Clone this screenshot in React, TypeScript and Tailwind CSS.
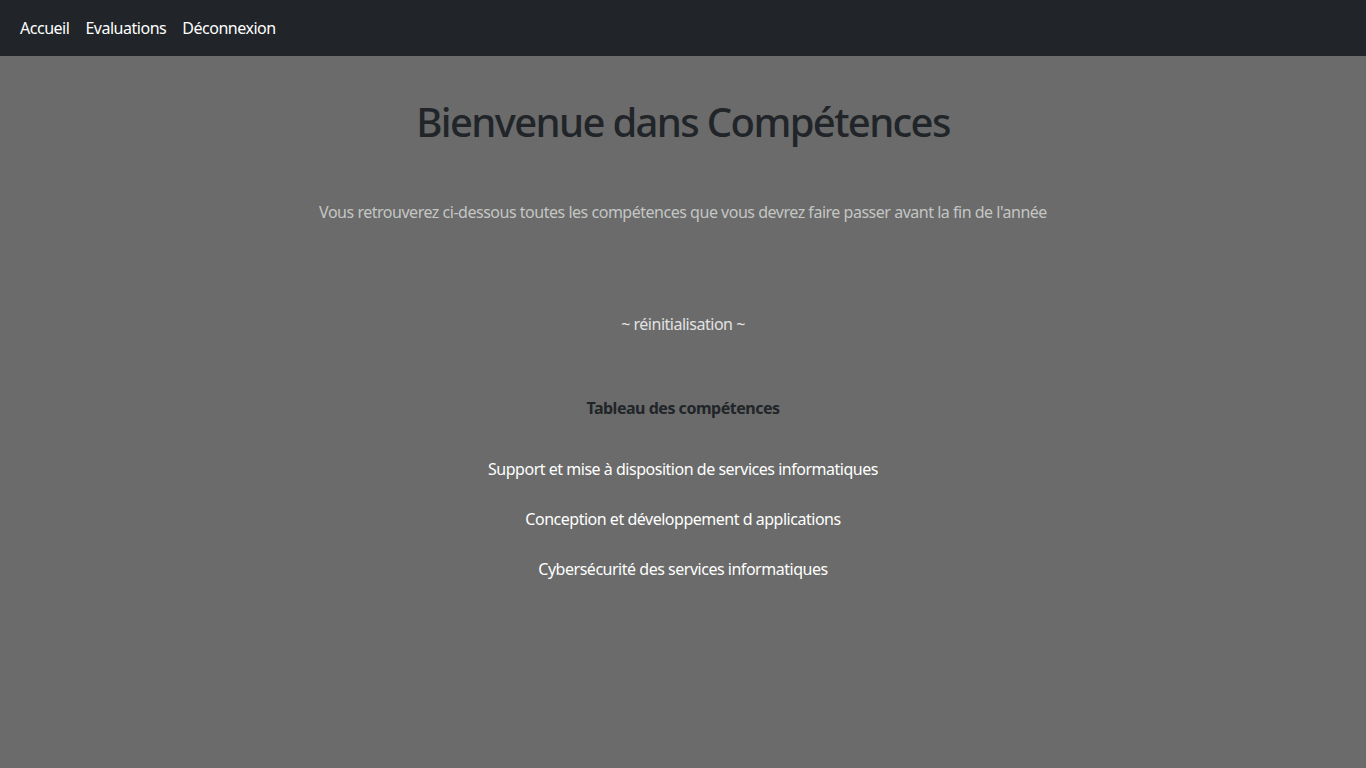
export default function App() {
  const font = { fontFamily: '"Noto Sans", "Open Sans", sans-serif' };
  return (
    <div style={font} className="min-h-screen bg-[#6a6b6a] flex flex-col tracking-[-0.03em]">
      <nav className="h-14 bg-[#212529] flex items-center px-5 gap-4 text-white text-base">
        <a>Accueil</a>
        <a>Evaluations</a>
        <a>Déconnexion</a>
      </nav>
      <main className="flex flex-col items-center text-center">
        <h1 className="mt-[38px] text-[40px] leading-[56px] font-medium tracking-[-0.041em] text-[#212529]">Bienvenue dans Compétences</h1>
        <p className="mt-[50px] text-base leading-6 text-[#c4c6c4]">Vous retrouverez ci-dessous toutes les compétences que vous devrez faire passer avant la fin de l'année</p>
        <p className="mt-[88px] text-base leading-6 text-[#e2e2e2]">~ réinitialisation ~</p>
        <h2 className="mt-[60px] text-base leading-6 font-bold text-[#212529]">Tableau des compétences</h2>
        <div className="mt-[37px] flex flex-col items-center gap-[26px] text-white text-base leading-6">
          <a>Support et mise à disposition de services informatiques</a>
          <a>Conception et développement d applications</a>
          <a>Cybersécurité des services informatiques</a>
        </div>
      </main>
    </div>
  );
}
